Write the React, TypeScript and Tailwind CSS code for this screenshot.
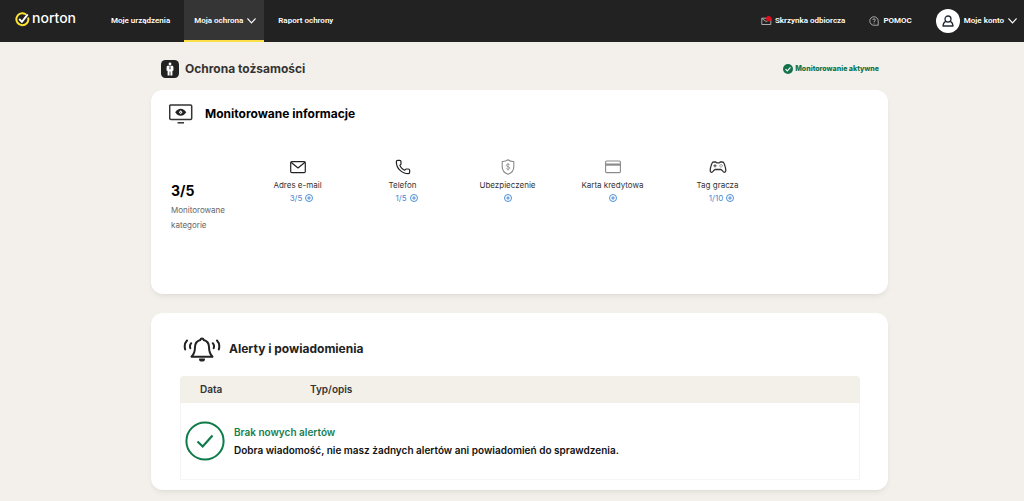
import React from 'react';
import { Phone } from 'lucide-react';

interface Category {
  label: string;
  count?: string;
  icon: React.ReactNode;
}

const Chevron = () => (
  <svg className="w-[9px] h-[6px]" viewBox="0 0 9 6" fill="none" stroke="#fff" strokeWidth="1.200" strokeLinecap="round">
    <path d="M.8.8l3.700 4 3.700-4" />
  </svg>
);

const MailIcon = () => (
  <svg className="w-4 h-4" viewBox="0 0 16 16" fill="none" stroke="#222" strokeWidth="1.2" strokeLinejoin="round">
    <rect x="0.7" y="2.6" width="14.6" height="11" rx="1.2" />
    <path d="M1 3.2 8 9l7-5.800" />
  </svg>
);

const ShieldIcon = () => (
  <svg className="w-4 h-4" viewBox="0 0 16 16" fill="none" stroke="#8a8a8a" strokeWidth="1.1" strokeLinejoin="round">
    <path d="M8 .8C6.400 2 4.300 2.600 2.200 2.500v5.200c0 3.700 2.500 6.300 5.800 7.600 3.300-1.300 5.800-3.900 5.800-7.600V2.500C11.700 2.600 9.600 2 8 .8z" />
    <path d="M9.700 6C9.500 5.300 8.800 5.100 8 5.100c-.9 0-1.700.4-1.700 1.200 0 1.900 3.500.9 3.500 2.800 0 .8-.8 1.300-1.800 1.300-.8 0-1.600-.3-1.800-1M8 4.100v7.300" strokeWidth="0.800" />
  </svg>
);

const CardIcon = () => (
  <svg className="w-4 h-4" viewBox="0 0 16 16" fill="none" stroke="#8a8a8a" strokeWidth="1.100">
    <rect x="0.600" y="2" width="14.800" height="11.600" rx="1" />
    <path d="M.6 5.600h14.800" strokeWidth="2.200" />
  </svg>
);

const GamepadIcon = () => (
  <svg className="w-[18px] h-4" viewBox="0 0 18 16" fill="none" stroke="#333" strokeWidth="1.3" strokeLinejoin="round" strokeLinecap="round">
    <path d="M4.800 3h2l.8.9h2.800l.8-.9h2c1.100 0 1.700.8 2.100 1.900.6 1.700 1.600 4.700 1.500 6.700 0 1.100-.6 1.800-1.400 1.800-1.400 0-2.300-2.900-3.600-2.900H6.200c-1.300 0-2.200 2.900-3.600 2.900-.8 0-1.400-.7-1.400-1.800-.1-2 .9-5 1.500-6.700C3.100 3.800 3.700 3 4.800 3z" />
    <path d="M6 5.600v2.400M4.800 6.800h2.400" strokeWidth="0.900" />
    <path d="M12 5.600v.1M12 8v.1M10.800 6.800h.1M13.200 6.800h.1" strokeWidth="0.900" />
  </svg>
);

const categories: Category[] = [
  { label: 'Adres e-mail', count: '3/5', icon: <MailIcon /> },
  { label: 'Telefon', count: '1/5', icon: <Phone className="w-4 h-4 text-[#222]" strokeWidth={1.8} /> },
  { label: 'Ubezpieczenie', icon: <ShieldIcon /> },
  { label: 'Karta kredytowa', icon: <CardIcon /> },
  { label: 'Tag gracza', count: '1/10', icon: <GamepadIcon /> },
];

const PlusCircle = () => (
  <svg className="w-2 h-2" viewBox="0 0 8 8" fill="none" stroke="#3b82d6">
    <circle cx="4" cy="4" r="3.500" strokeWidth="0.900" />
    <path d="M4 2.200v3.600M2.200 4h3.600" strokeWidth="0.900" />
  </svg>
);

const Header = () => (
  <header className="flex h-[42px] items-stretch bg-[#222] pr-[7px] pl-[15px] font-['Roboto',sans-serif] text-[8px] font-semibold text-white">
    <a href="#" className="flex w-[86px] items-center gap-[2px] pb-1" aria-label="norton">
      <svg className="w-[15px] h-[15px]" viewBox="0 0 15 15" fill="none" strokeLinecap="round">
        <path d="M10.300 2A6 6 0 1 0 13.300 6.300" stroke="#fde32f" strokeWidth="2" />
        <path d="M4.200 7l2.700 2.900L12.700 2.400" stroke="#fff" strokeWidth="1.900" strokeLinecap="butt" />
      </svg>
      <span className="pb-[2px] font-['Inter',sans-serif] text-[14px] leading-4 font-medium">norton</span>
    </a>

    <nav className="flex items-stretch">
      <a href="#" className="flex items-center pr-[14px] pl-[10px]">Moje urządzenia</a>
      <button className="flex items-center gap-1 border-b-2 border-[#fde047] bg-[#353535] pt-[2px] pr-2 pl-[10px]">
        Moja ochrona
        <Chevron />
      </button>
      <a href="#" className="flex items-center px-[14px]">Raport ochrony</a>
    </nav>

    <div className="ml-auto flex items-center">
      <a href="#" className="mr-6 flex items-center gap-[3px]">
        <svg className="w-[11px] h-[10px]" viewBox="0 0 11 10" fill="none">
          <path d="M.8 2.200h9v6.300h-9zM1 2.500l4.300 3.200 4.300-3.200" stroke="#bbb" strokeWidth="0.900" />
          <circle cx="7.700" cy="2.700" r="2.600" fill="#e0101d" />
        </svg>
        Skrzynka odbiorcza
      </a>
      <a href="#" className="mr-6 flex items-center gap-1">
        <svg className="w-[10px] h-[10px]" viewBox="0 0 9 9" fill="none" stroke="#ccc" strokeWidth="0.700">
          <path d="M8.300 8.300H4.500a3.800 3.800 0 1 1 3.800-3.800z" />
          <path d="M3.400 3.600c0-1.500 2.300-1.400 2.300 0 0 .9-1.200.8-1.200 1.800M4.500 6v.8" />
        </svg>
        POMOC
      </a>
      <button className="flex items-center gap-1">
        <span className="flex h-6 w-6 items-center justify-center rounded-full bg-white">
          <svg className="w-3 h-3" viewBox="0 0 12 12" fill="none" stroke="#222b36" strokeWidth="1.300" strokeLinejoin="round">
            <circle cx="6" cy="4" r="3" />
            <path d="M3.700 6.300C2 7 1.200 8.800 1 11h10c-.2-2.200-1-4-2.700-4.700" />
          </svg>
        </span>
        Moje konto
        <Chevron />
      </button>
    </div>
  </header>
);

const MonitoredInfo = () => (
  <section className="h-[204px] rounded-xl bg-white px-[18px] pt-[14px] shadow-md shadow-black/5">
    <div className="flex items-center gap-3">
      <svg className="w-6 h-5" viewBox="0 0 24 20" fill="none" stroke="#333">
        <rect x="0.700" y="0.900" width="22" height="14.600" rx="1.200" strokeWidth="1.500" />
        <path d="M8.500 18.800h6.500" strokeWidth="1.500" />
        <path d="M6.200 8.200C9 3.500 14.400 3.500 17.200 8.200 14.400 12.900 9 12.900 6.200 8.200z" fill="#222" stroke="none" />
        <path d="M11.700 6.200l1.800 2-1.800 2-1.800-2z" fill="#fff" stroke="none" />
        <circle cx="11.700" cy="8.200" r="0.500" fill="#222" stroke="none" />
      </svg>
      <h2 className="text-[12px] leading-5 font-bold text-black">Monitorowane informacje</h2>
    </div>

    <div className="flex pt-[35px]">
      <div className="w-[76px] shrink-0 pt-[22px] pl-[2px]">
        <p className="text-[14px] leading-5 font-bold text-black">3/5</p>
        <p className="pt-[2px] text-[8px] leading-[15px] text-[#666]">Monitorowane kategorie</p>
      </div>
      <ul className="flex">
        {categories.map((item) => (
          <li key={item.label} className="flex w-[105px] flex-col items-center text-[8px]">
            {item.icon}
            <span className="pt-[2px] leading-4 whitespace-nowrap text-[#333]">{item.label}</span>
            <a href="#" aria-label={item.label} className="flex h-[10px] items-center text-[#4a86d0]">
              {item.count && <span className="pr-[3px] pl-2">{item.count}</span>}
              <PlusCircle />
            </a>
          </li>
        ))}
      </ul>
    </div>
  </section>
);

const Alerts = () => (
  <section className="rounded-xl bg-white pt-[22px] pr-7 pb-[10px] pl-[29px] shadow-md shadow-black/5">
    <div className="flex items-center gap-2 pl-[3px]">
      <svg className="w-[38px] h-7" viewBox="0 0 38 28" fill="none" stroke="#222" strokeWidth="2" strokeLinecap="round" strokeLinejoin="round">
        <path d="M17.300 5c.4-2 3-2 3.400 0 3.500 1 5.300 3.500 5.300 7 0 4.500.8 7 3.500 9.800h-21C11.200 19 12 16.500 12 12c0-3.500 1.800-6 5.300-7z" />
        <path d="M16.600 24h4.800a2.400 2 0 0 1-4.800 0z" fill="#222" strokeWidth="1.200" />
        <path d="M4 5.500C1.600 8 1.200 11 2.200 14.500M8.200 8.200c-1.400 1.700-1.500 3.300-.9 5M34 5.500c2.400 2.500 2.800 5.500 1.800 9M29.800 8.200c1.400 1.700 1.500 3.300.9 5" />
      </svg>
      <h2 className="text-[12px] leading-5 font-bold text-[#222]">Alerty i powiadomienia</h2>
    </div>

    <table className="mt-[13px] w-full border-separate border-spacing-0 text-left text-[10px]">
      <thead className="text-[#333]">
        <tr className="h-[27px]">
          <th className="w-[110px] rounded-tl-sm bg-[#f3efe9] pl-5 font-semibold">Data</th>
          <th className="rounded-tr-sm bg-[#f3efe9] pl-5 font-semibold">Typ/opis</th>
        </tr>
      </thead>
      <tbody>
        <tr>
          <td colSpan={2} className="h-[77px] border border-t-0 border-[#f5f5f5] pl-1">
            <div className="flex items-center gap-[9px]">
              <svg className="w-10 h-10 shrink-0" viewBox="0 0 40 40" fill="none" stroke="#0f7b4b" strokeWidth="2">
                <circle cx="20" cy="20" r="18.600" />
                <path d="M12.500 20.500l5.200 5L27.500 14.500" strokeWidth="2.200" />
              </svg>
              <div className="font-semibold">
                <p className="leading-[18px] text-[#17804f]">Brak nowych alertów</p>
                <p className="leading-[18px] text-[#111]">
                  Dobra wiadomość, nie masz żadnych alertów ani powiadomień do sprawdzenia.
                </p>
              </div>
            </div>
          </td>
        </tr>
      </tbody>
    </table>
  </section>
);

export default function App() {
  return (
    <div className="min-h-screen bg-[#f3f0eb] font-['Inter',sans-serif]">
      <Header />
      <main className="pb-3 pl-[15px]">
        <div className="mx-auto flex max-w-[737px] flex-col">
          <div className="flex items-center gap-[6px] pt-[17px] pr-[9px] pb-[11px] pl-[10px]">
            <svg className="w-[18px] h-[18px]" viewBox="0 0 18 18" fill="#fff">
              <rect width="18" height="18" rx="4.500" fill="#222" />
              <circle cx="9" cy="4" r="1.400" />
              <path d="M7 5.800h4c.9 0 1.400.6 1.400 1.400v3.600h-1V15.500H9.400V11.500h-.8v4H6.600v-4.700h-1V7.200c0-.8.500-1.400 1.400-1.400z" />
              <path d="M8.600 5.800h.8l.3 3-.7.900-.7-.9z" fill="#555" />
            </svg>
            <h1 className="text-[12px] leading-5 font-bold text-[#333]">Ochrona tożsamości</h1>
            <div className="ml-auto flex items-center gap-[2px] text-[7px] font-extrabold text-[#12734a]">
              <svg className="w-[10px] h-[10px]" viewBox="0 0 10 10" fill="none">
                <circle cx="5" cy="5" r="5" fill="#12734a" />
                <path d="M2.600 5.100l1.700 1.700 3.200-3.400" stroke="#fff" strokeWidth="1.200" />
              </svg>
              Monitorowanie aktywne
            </div>
          </div>

          <div className="flex flex-col gap-[19px]">
            <MonitoredInfo />
            <Alerts />
          </div>
        </div>
      </main>
    </div>
  );
}
